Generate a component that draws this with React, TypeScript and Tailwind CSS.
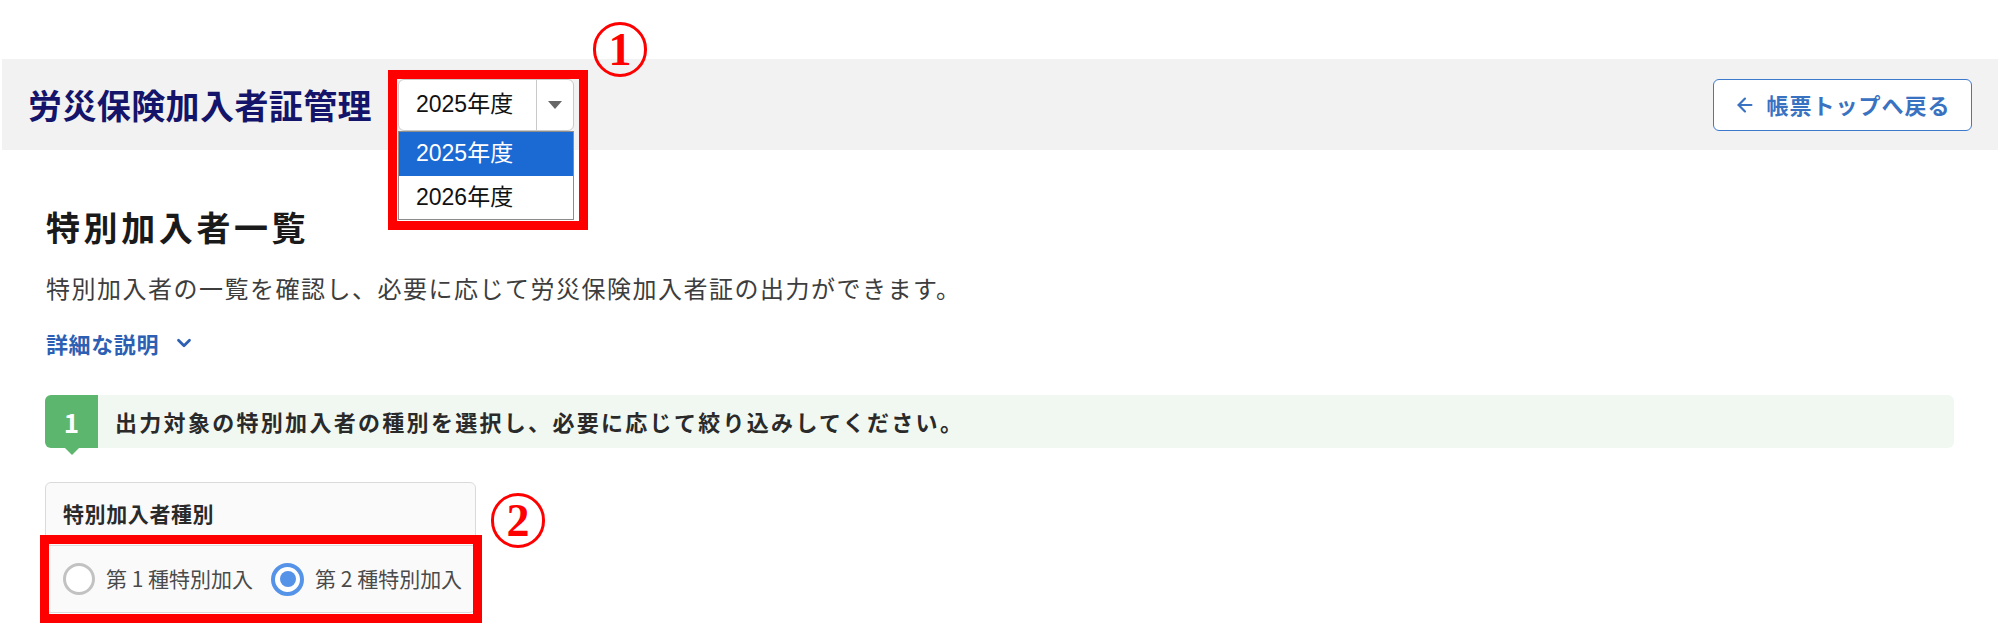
import React from 'react';
import { ArrowLeft, ChevronDown } from 'lucide-react';

const jp = { fontFamily: '"Noto Sans CJK JP", "Noto Sans", sans-serif' };

const YearSelect: React.FC = () => {
    return (
        <div className="relative w-[176px] h-[52px]">
            <div className="flex h-full bg-white border border-[#c9c9c9] rounded-[6px]">
                <div className="flex-1 flex items-center pl-[17px] text-[23px] text-[#111]">2025年度</div>
                <div className="w-[37px] border-l border-[#c9c9c9] flex items-center justify-center">
                    <div className="w-0 h-0 border-l-[7px] border-r-[7px] border-t-[8px] border-l-transparent border-r-transparent border-t-[#666]" />
                </div>
            </div>

            {/* open list */}
            <div className="absolute left-0 top-[52px] w-[176px] bg-white border border-[#8c8c8c] z-10">
                <div className="h-[44px] flex items-center pl-[17px] bg-[#1b69d3] text-white text-[23px]">2025年度</div>
                <div className="h-[43px] flex items-center pl-[17px] text-[#111] text-[23px]">2026年度</div>
            </div>

            {/* annotation */}
            <div className="absolute -left-[10px] -top-[9px] w-[200px] h-[160px] border-[9px] border-[#ff0000] z-20" />
        </div>
    );
};

const Marker: React.FC<{ n: string; className: string }> = ({ n, className }) => (
    <div
        className={`absolute w-[54px] h-[55px] rounded-full border-[3px] border-[#ff0000] flex items-center justify-center text-[#ff0000] text-[46px] font-bold leading-none ${className}`}
        style={{ fontFamily: '"Liberation Serif", serif' }}
    >
        {n}
    </div>
);

export default function App() {
    return (
        <div className="relative w-[2000px] h-[634px] overflow-hidden bg-white" style={jp}>
            <Marker n="1" className="left-[593px] top-[22px]" />

            {/* Header */}
            <div className="mt-[59px] mx-[2px] h-[91px] bg-[#f2f2f2] flex items-center justify-between px-[26px]">
                <div className="flex items-center gap-[26px]">
                    <h1 className="text-[34px] font-bold text-[#14146a] leading-none tracking-[0.4px]">労災保険加入者証管理</h1>
                    <div style={{ fontFamily: '"Liberation Sans", "Noto Sans CJK JP", sans-serif' }}>
                        <YearSelect />
                    </div>
                </div>
                <button className="w-[259px] h-[52px] bg-white border-[1.5px] border-[#3d79cc] rounded-[6px] flex items-center justify-center gap-[10px] text-[#3a72c2] text-[22px] font-semibold tracking-[1px]">
                    <ArrowLeft size={22} strokeWidth={2.4} />
                    帳票トップへ戻る
                </button>
            </div>

            {/* Main */}
            <div className="pl-[45px] pr-[46px]">
                <h2 className="mt-[57px] pl-[1px] text-[34px] leading-[40px] font-bold text-[#1a1a1a] tracking-[3.6px]">特別加入者一覧</h2>
                <p className="mt-[23px] pl-[1px] text-[24px] leading-[36px] text-[#3d3d3d] tracking-[1.5px]">
                    特別加入者の一覧を確認し、必要に応じて労災保険加入者証の出力ができます。
                </p>
                <button className="mt-[21px] pl-[1px] flex items-center gap-[14px] text-[22px] leading-[32px] font-bold text-[#2d5fb3] tracking-[0.6px]">
                    詳細な説明
                    <ChevronDown size={22} strokeWidth={3} />
                </button>

                {/* Step */}
                <div className="mt-[36px] h-[53px] flex items-center bg-[#f1f8f2] rounded-[6px]">
                    <div className="relative w-[53px] h-full bg-[#5db66d] rounded-l-[6px] flex items-center justify-center text-white text-[26px] font-bold">
                        1
                        <div className="absolute left-1/2 -translate-x-1/2 -bottom-[7px] w-0 h-0 border-l-[7px] border-r-[7px] border-t-[7px] border-l-transparent border-r-transparent border-t-[#5db66d]" />
                    </div>
                    <p className="pl-[17px] text-[22px] font-bold text-[#2a2a2a] tracking-[2.3px]">
                        出力対象の特別加入者の種別を選択し、必要に応じて絞り込みしてください。
                    </p>
                </div>

                {/* Filter card */}
                <div className="relative mt-[34px] w-[431px] bg-[#fafafa] border border-[#dadada] rounded-[6px]">
                    <div className="h-[62px] flex items-center pl-[17px] text-[21px] font-bold text-[#2a2a2a] tracking-[0.6px]">
                        特別加入者種別
                    </div>
                    <div className="h-[67px] border-t border-[#dcdcdc] flex items-center pl-[17px] text-[21px] text-[#4a4a4a]">
                        <label className="flex items-center gap-[11px]">
                            <span className="w-[32px] h-[32px] rounded-full border-[3.5px] border-[#c2c2c2] bg-white" />
                            第 1 種特別加入
                        </label>
                        <label className="ml-[18px] flex items-center gap-[11px]">
                            <span className="w-[33px] h-[33px] rounded-full border-[4px] border-[#5593e8] bg-white flex items-center justify-center">
                                <span className="w-[16px] h-[16px] rounded-full bg-[#5593e8]" />
                            </span>
                            第 2 種特別加入
                        </label>
                    </div>

                    {/* annotations */}
                    <div className="absolute -left-[6px] top-[52px] w-[442px] h-[88px] border-[9px] border-[#ff0000]" />
                    <Marker n="2" className="left-[445px] top-[10px]" />
                </div>
            </div>
        </div>
    );
}
